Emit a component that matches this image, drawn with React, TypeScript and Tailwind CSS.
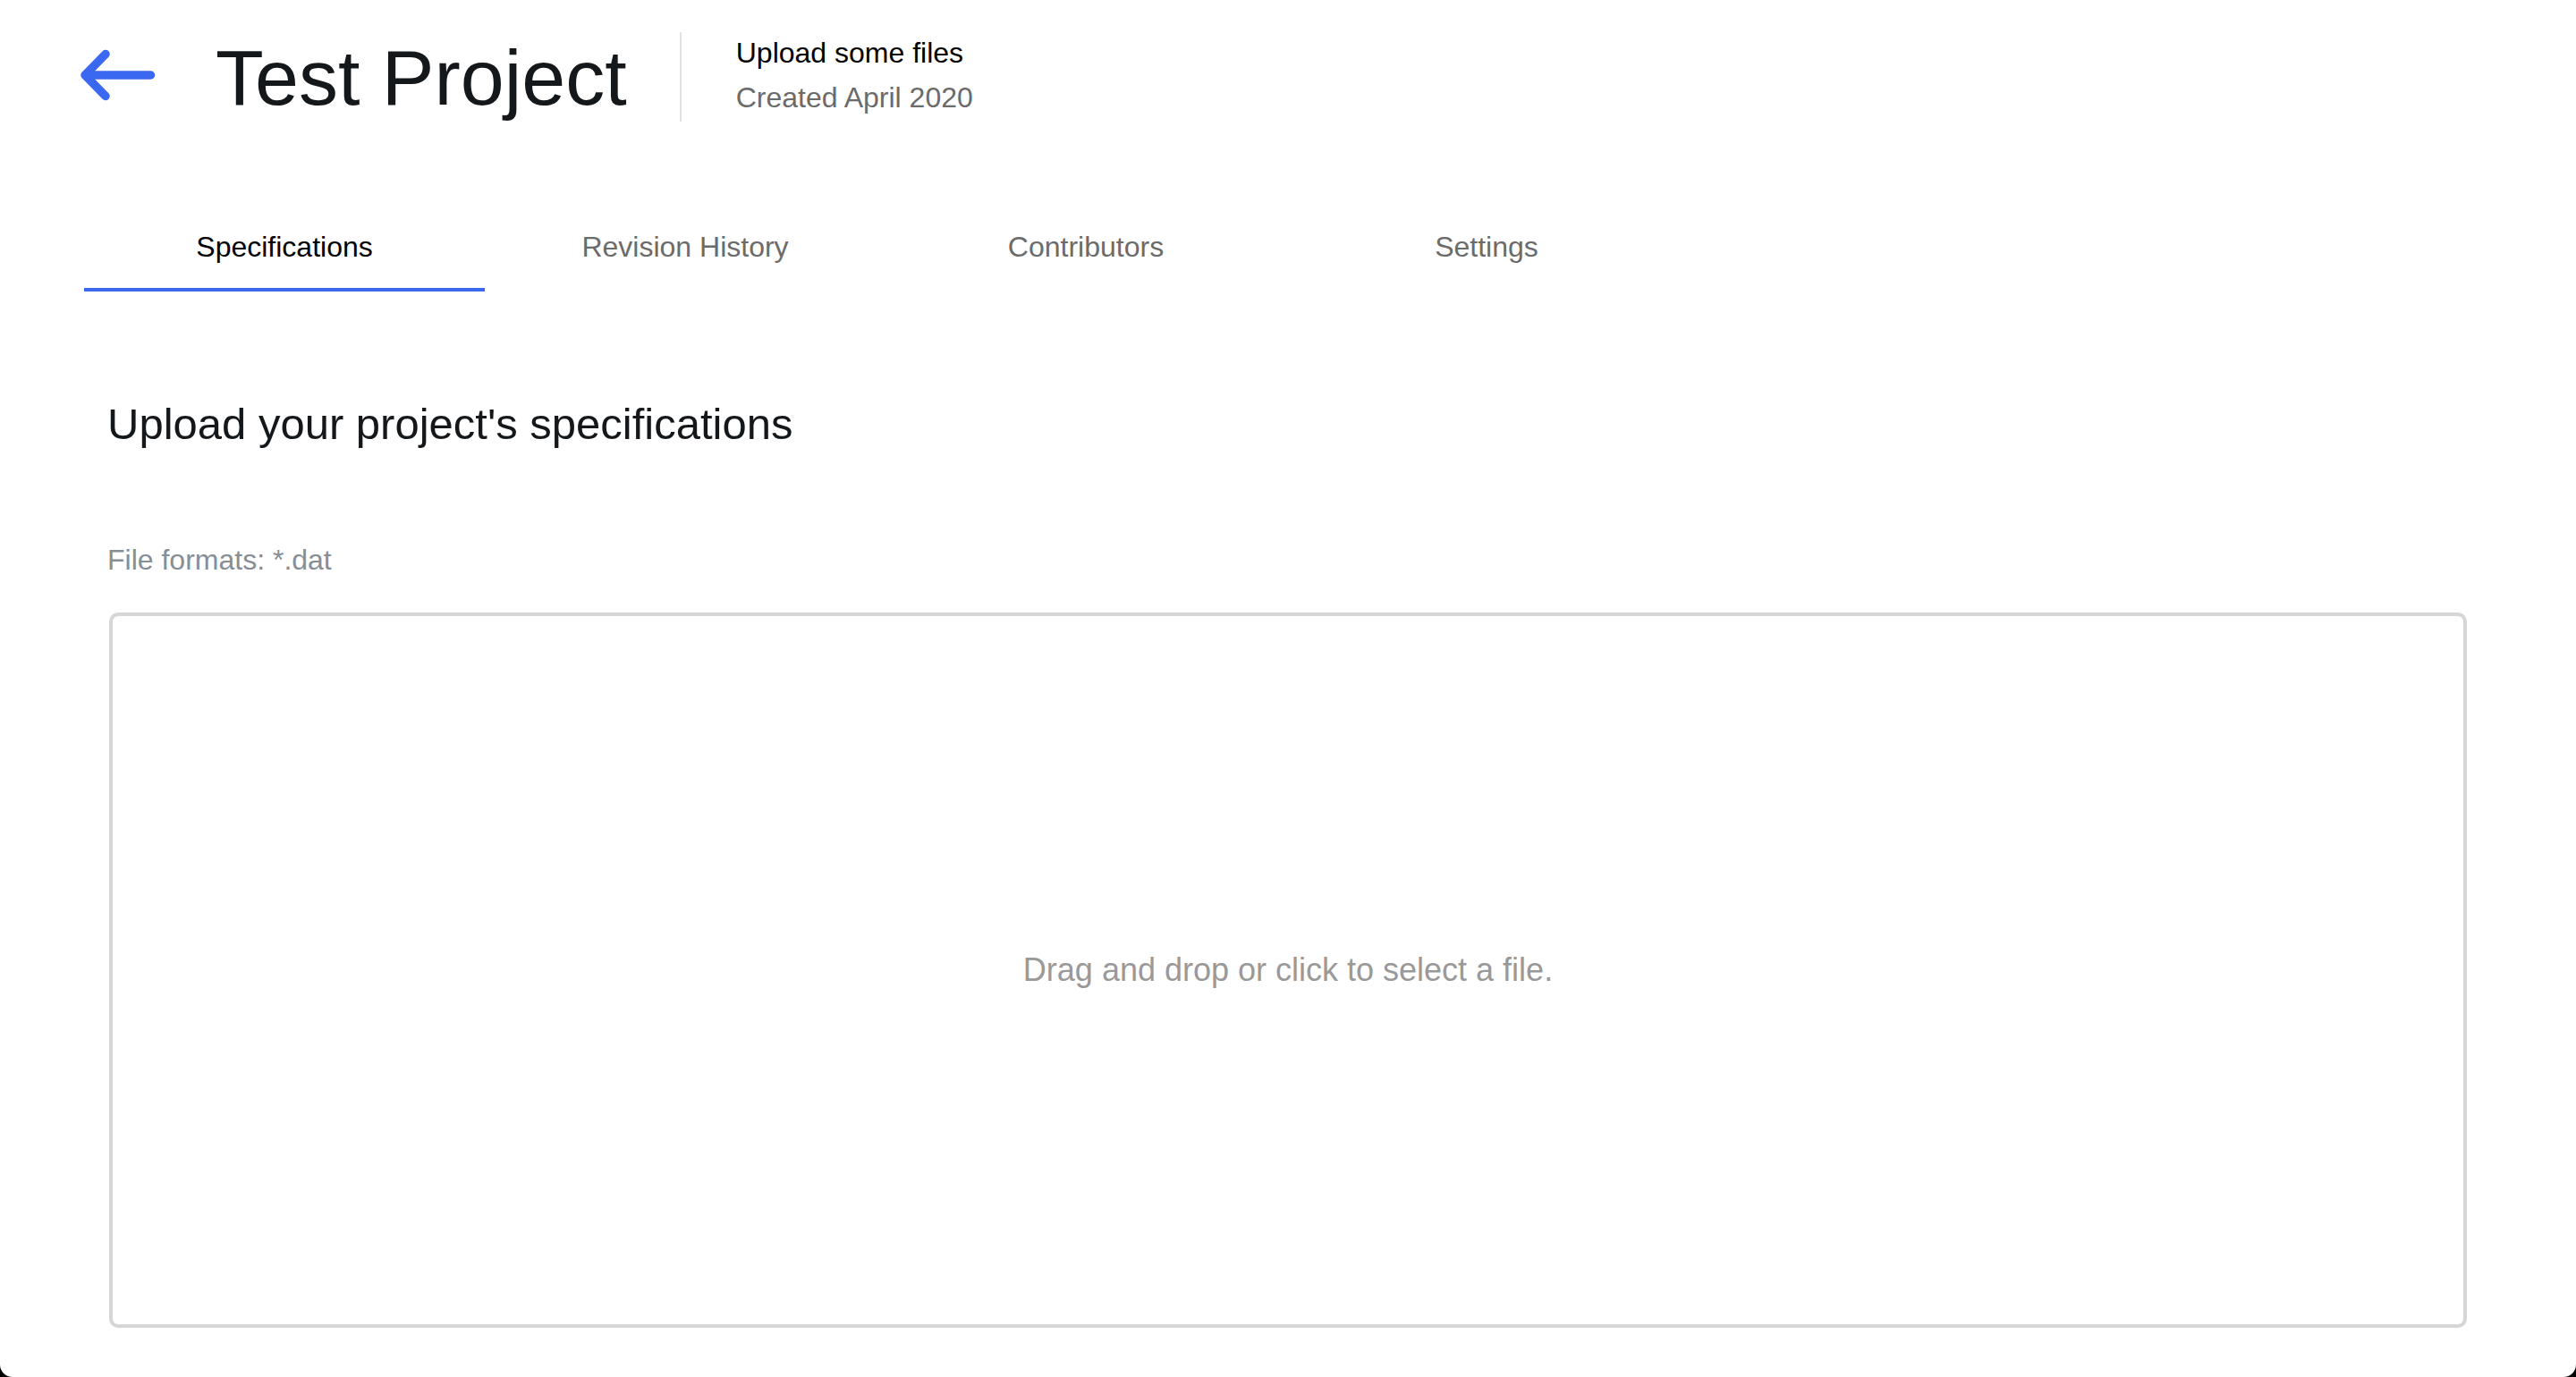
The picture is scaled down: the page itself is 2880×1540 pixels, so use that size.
import React, { useState } from 'react'

const TABS = ['Specifications', 'Revision History', 'Contributors', 'Settings']

function BackArrow() {
  return (
    <svg width="96" height="64" viewBox="0 0 96 64" fill="none" className="shrink-0">
      <path
        d="M84.5 32H11M11 32L34 8.5M11 32L34 55.5"
        stroke="#3b68f0"
        strokeWidth="9.5"
        strokeLinecap="round"
        strokeLinejoin="round"
      />
    </svg>
  )
}

export default function App() {
  const [active, setActive] = useState(0)

  return (
    <div className="h-[1540px] bg-black">
      <div className="flex h-full flex-col rounded-b-[14px] bg-white font-['Liberation_Sans',Arial,sans-serif]">
        {/* Header */}
        <div className="flex items-start pl-[84px] pt-[36px]">
          <button className="mt-[16px]">
            <BackArrow />
          </button>
          <h1 className="ml-[61px] mt-[7px] text-[88px] leading-[88px] text-[#15181b]">Test Project</h1>
          <div className="ml-[59px] h-[100px] w-[2px] bg-[#e2e2e2]" />
          <div className="ml-[61px] -mt-[2px] text-[32px] leading-[50px]">
            <p className="text-black">Upload some files</p>
            <p className="text-[#6b6b6b]">Created April 2020</p>
          </div>
        </div>

        {/* Tabs */}
        <div className="mt-[120px] flex pl-[94px]">
          {TABS.map((t, i) => (
            <button
              key={t}
              onClick={() => setActive(i)}
              className={`w-[448px] border-b-4 pb-[26px] text-center text-[32px] leading-[40px] ${
                i === active ? 'border-[#3b68f0] text-black' : 'border-transparent text-[#6b6b6b]'
              }`}
            >
              {t}
            </button>
          ))}
        </div>

        {/* Content */}
        <div className="px-[120px]">
          <h2 className="mt-[120px] text-[49px] leading-[56px] text-[#15181b]">Upload your project's specifications</h2>
          <p className="mt-[106px] text-[32px] leading-[36px] text-[#868e96]">File formats: *.dat</p>
          <div className="mx-[2px] mt-[41px] flex h-[800px] cursor-pointer items-center justify-center rounded-[10px] border-4 border-[#d6d6d6]">
            <p className="text-[36px] leading-[44px] text-[#999999]">Drag and drop or click to select a file.</p>
          </div>
        </div>
      </div>
    </div>
  )
}
